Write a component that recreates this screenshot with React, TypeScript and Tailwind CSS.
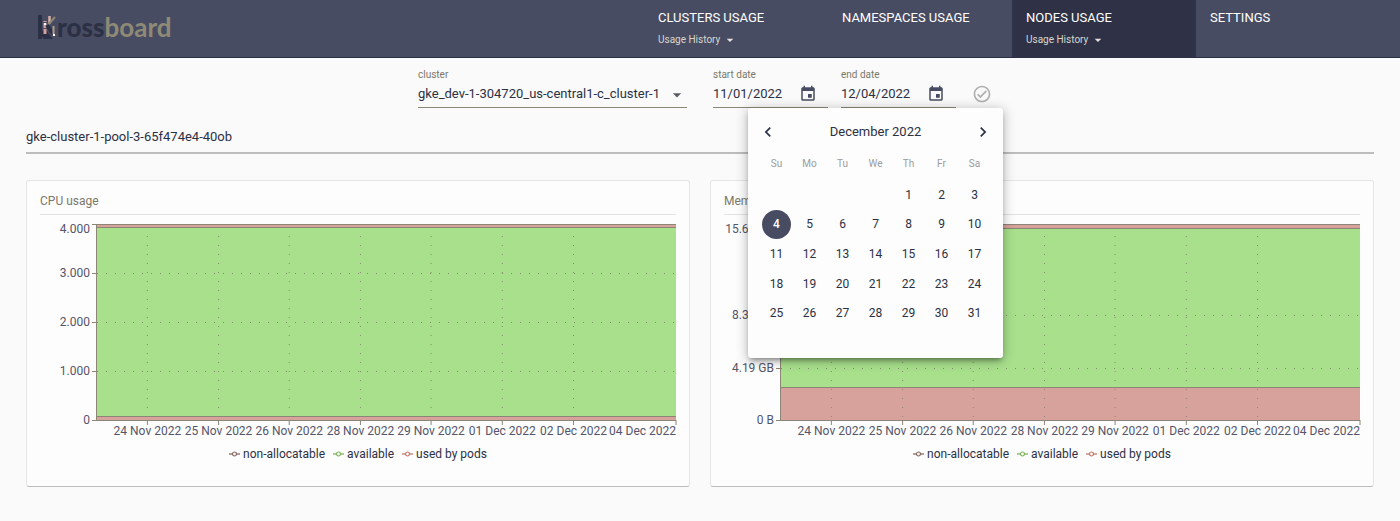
import { useState } from "react";
import {
  MdArrowDropDown,
  MdChevronLeft,
  MdChevronRight,
  MdEvent,
  MdOutlineCheckCircle,
} from "react-icons/md";

const PLOT_HEIGHT = 196;
const GREEN = "#a8e08c";
const RED = "#d8a29c";
const AXIS = "#8c8676";

const NAV = [
  { title: "CLUSTERS USAGE", menu: true, active: false },
  { title: "NAMESPACES USAGE", menu: false, active: false },
  { title: "NODES USAGE", menu: true, active: true },
  { title: "SETTINGS", menu: false, active: false },
];

const X_TICKS = [
  { label: "24 Nov 2022", at: 8.7 },
  { label: "25 Nov 2022", at: 21 },
  { label: "26 Nov 2022", at: 33.2 },
  { label: "28 Nov 2022", at: 45.5 },
  { label: "29 Nov 2022", at: 57.7 },
  { label: "01 Dec 2022", at: 70 },
  { label: "02 Dec 2022", at: 82.3 },
  { label: "04 Dec 2022", at: 100 },
];

const SERIES = [
  { name: "non-allocatable", color: "#8a6a62" },
  { name: "available", color: "#7fb45e" },
  { name: "used by pods", color: "#c07a6c" },
];

type YTick = { label: string; y: number };

type ChartProps = {
  title: string;
  yTicks: YTick[];
  topBand: number;
  bottomBand: number;
};

function Logo() {
  return (
    <a href="#home" aria-label="Krossboard" className="flex items-center pb-1">
      <svg width="19" height="26" viewBox="0 0 19 26" aria-hidden="true">
        <rect x="0" y="1" width="4" height="24" fill="#2c3044" />
        <path d="M4 17l3-2 8 10h-9l-2-2z" fill="#2c3044" />
        <path d="M7 20V7" stroke="#d8a29c" strokeWidth="3" strokeDasharray="5 1" />
        <path d="M11.500 2v8" stroke="#dcb0a8" strokeWidth="2.500" />
        <path d="M17 3l-7 8" stroke="#8c8874" strokeWidth="2" />
        <path d="M9 11l6 9" stroke="#2c3044" strokeWidth="4" />
        <path d="M15.500 12v8" stroke="#b09c8c" strokeWidth="2" />
        <rect x="6" y="9" width="2" height="2" fill="#ffffff" />
        <rect x="15" y="20" width="2" height="2" fill="#ffffff" />
      </svg>
      <span className="font-['Lato',sans-serif] text-[26px] leading-7 font-black text-[#2c3044]">
        ross
      </span>
      <span className="font-['Lato',sans-serif] text-[26px] leading-7 font-bold text-[#8e8a76]">
        board
      </span>
    </a>
  );
}

function Header() {
  return (
    <header className="flex h-[58px] border-b border-[#2c3044] bg-[#484c62] pr-5 pl-[38px]">
      <Logo />
      <nav className="ml-auto flex">
        {NAV.map((item) => (
          <div
            key={item.title}
            className={
              item.active
                ? "w-[184px] bg-[#2f3246] pt-2.5 pl-3.5"
                : "w-[184px] pt-2.5 pl-3.5"
            }
          >
            <a href="#usage" className="block text-[13px] leading-4 text-white">
              {item.title}
            </a>
            {item.menu && (
              <button
                type="button"
                aria-haspopup="menu"
                className="mt-1.5 flex items-center text-[10px] leading-4 text-[#d8d6cc]"
              >
                Usage History
                <MdArrowDropDown className="ml-0.5 size-4 text-[#e8e0dc]" />
              </button>
            )}
          </div>
        ))}
      </nav>
    </header>
  );
}

type DateFieldProps = {
  id: string;
  label: string;
  value: string;
  onChange: (value: string) => void;
};

function DateField({ id, label, value, onChange }: DateFieldProps) {
  return (
    <div className="w-[115px] border-b border-[#8c8676]">
      <label htmlFor={id} className="block text-[10px] leading-3 text-[#7c7868]">
        {label}
      </label>
      <div className="flex h-[26px] items-center">
        <input
          id={id}
          type="text"
          value={value}
          onChange={(e) => onChange(e.target.value)}
          className="w-[86px] bg-transparent text-[13px] leading-4 outline-none"
        />
        <button type="button" aria-label={"Choose " + label}>
          <MdEvent className="size-[18px] text-[#484c62]" />
        </button>
      </div>
    </div>
  );
}

const WEEKDAYS = ["Su", "Mo", "Tu", "We", "Th", "Fr", "Sa"];
const FIRST_WEEKDAY = 4;
const WEEKS = [0, 1, 2, 3, 4].map((week) =>
  WEEKDAYS.map((_, i) => {
    const day = week * 7 + i - FIRST_WEEKDAY + 1;
    return day >= 1 && day <= 31 ? day : null;
  }),
);

function Calendar({ selected, onSelect }: { selected: number; onSelect: (day: number) => void }) {
  return (
    <div
      role="dialog"
      aria-label="Choose date"
      className="absolute top-full -right-[47px] z-10 w-[255px] rounded-[3px] bg-[#fdfdfd] px-3 pt-3 pb-[30px] shadow-[0_4px_5px_-2px_rgba(0,0,0,0.35),0_2px_12px_1px_rgba(0,0,0,0.25)]"
    >
      <div className="-mx-0.5 flex h-6 items-center justify-between">
        <button type="button" aria-label="Previous month">
          <MdChevronLeft className="size-5" />
        </button>
        <span className="text-[13px] leading-4">December 2022</span>
        <button type="button" aria-label="Next month">
          <MdChevronRight className="size-5" />
        </button>
      </div>
      <table className="mt-1 h-[180px] w-full table-fixed text-center">
        <thead>
          <tr className="h-8">
            {WEEKDAYS.map((day) => (
              <th key={day} className="p-0 text-[10px] leading-3 font-normal text-[#9c9c9c]">
                {day}
              </th>
            ))}
          </tr>
        </thead>
        <tbody>
          {WEEKS.map((week, w) => (
            <tr key={w}>
              {week.map((day, d) => (
                <td key={d} className="p-0">
                  {day && (
                    <button
                      type="button"
                      onClick={() => onSelect(day)}
                      className={
                        day === selected
                          ? "mx-auto block size-[29px] rounded-full bg-[#484c62] text-xs font-medium text-white"
                          : "mx-auto block size-[29px] rounded-full text-xs"
                      }
                    >
                      {day}
                    </button>
                  )}
                </td>
              ))}
            </tr>
          ))}
        </tbody>
      </table>
    </div>
  );
}

function Filters() {
  const [start, setStart] = useState("11/01/2022");
  const [end, setEnd] = useState("12/04/2022");
  const pickEnd = (day: number) => setEnd("12/" + String(day).padStart(2, "0") + "/2022");
  const selectedDay = Number(end.split("/")[1]);

  return (
    <form className="flex justify-center pt-[11px] pl-2.5">
      <div className="relative w-[269px] border-b border-[#8c8676]">
        <label htmlFor="cluster" className="block text-[10px] leading-3 text-[#7c7868]">
          cluster
        </label>
        <select
          id="cluster"
          className="block h-[26px] w-full appearance-none bg-transparent text-[13px] outline-none"
        >
          <option>gke_dev-1-304720_us-central1-c_cluster-1</option>
        </select>
        <MdArrowDropDown className="pointer-events-none absolute right-0 bottom-0.5 size-5 text-[#5c5c62]" />
      </div>
      <div className="ml-[26px]">
        <DateField id="start-date" label="start date" value={start} onChange={setStart} />
      </div>
      <div className="relative ml-[13px]">
        <DateField id="end-date" label="end date" value={end} onChange={setEnd} />
        <Calendar selected={selectedDay} onSelect={pickEnd} />
      </div>
      <button type="button" aria-label="Apply" className="ml-4 self-center pt-2.5">
        <MdOutlineCheckCircle className="size-5 text-[#b0b0ae]" />
      </button>
    </form>
  );
}

function ChartCard({ title, yTicks, topBand, bottomBand }: ChartProps) {
  return (
    <section className="rounded-[3px] border border-[#e6e6e6] border-b-[#bdbdbd] bg-[#fdfdfd] px-[13px] pt-3 pb-6">
      <h2 className="border-b border-[#e2e2e2] pb-[5px] text-xs leading-4 text-[#7c7868]">
        {title}
      </h2>
      <div className="mt-[9px] flex">
        <svg
          className="h-[218px] w-[57px] shrink-0 overflow-visible fill-[#55556a] text-xs"
          aria-hidden="true"
        >
          {yTicks.map((t) => (
            <g key={t.label}>
              <line x1="52" x2="57" y1={t.y + 0.5} y2={t.y + 0.5} stroke={AXIS} />
              <text x="50" y={Math.max(t.y + 4, 9)} textAnchor="end">
                {t.label}
              </text>
            </g>
          ))}
        </svg>
        <svg
          className="h-[218px] min-w-0 flex-1 overflow-visible fill-[#55556a] text-xs"
          role="img"
          aria-label={title}
        >
          <rect width="100%" height={PLOT_HEIGHT} fill={GREEN} />
          <rect width="100%" height={topBand} fill={RED} />
          <rect y={PLOT_HEIGHT - bottomBand} width="100%" height={bottomBand} fill={RED} />
          {yTicks.slice(1, -1).map((t) => (
            <line
              key={t.label}
              x1="0"
              x2="100%"
              y1={t.y + 0.5}
              y2={t.y + 0.5}
              stroke={AXIS}
              strokeDasharray="1 8"
            />
          ))}
          {X_TICKS.slice(0, -1).map((t) => (
            <line
              key={t.label}
              x1={t.at + "%"}
              x2={t.at + "%"}
              y1="12"
              y2={PLOT_HEIGHT}
              stroke={AXIS}
              strokeDasharray="1 8"
            />
          ))}
          <line x1="0" x2="100%" y1="0.5" y2="0.5" stroke={AXIS} />
          <line x1="0" x2="100%" y1={topBand - 0.5} y2={topBand - 0.5} stroke={AXIS} />
          <line
            x1="0"
            x2="100%"
            y1={PLOT_HEIGHT - bottomBand + 0.5}
            y2={PLOT_HEIGHT - bottomBand + 0.5}
            stroke={AXIS}
          />
          <line x1="0" x2="100%" y1={PLOT_HEIGHT + 0.5} y2={PLOT_HEIGHT + 0.5} stroke={AXIS} />
          <line x1="-0.5" x2="-0.5" y1="0" y2={PLOT_HEIGHT + 1} stroke={AXIS} />
          {X_TICKS.map((t) => (
            <g key={t.label}>
              <line
                x1={t.at + "%"}
                x2={t.at + "%"}
                y1={PLOT_HEIGHT}
                y2={PLOT_HEIGHT + 5}
                stroke={AXIS}
              />
              <text
                x={t.at + "%"}
                y={PLOT_HEIGHT + 15}
                textAnchor={t.at === 100 ? "end" : "middle"}
              >
                {t.label}
              </text>
            </g>
          ))}
        </svg>
      </div>
      <ul className="mt-1 flex justify-center gap-2">
        {SERIES.map((s) => (
          <li key={s.name} className="flex items-center gap-[3px] text-xs leading-4">
            <svg width="11" height="6" viewBox="0 0 11 6" stroke={s.color} aria-hidden="true">
              <path d="M0 3h11" strokeWidth="1.300" />
              <circle cx="5.500" cy="3" r="2" fill="#fdfdfd" strokeWidth="1.200" />
            </svg>
            {s.name}
          </li>
        ))}
      </ul>
    </section>
  );
}

export default function App() {
  return (
    <div className="min-h-screen bg-[#fafafa] font-['Roboto',sans-serif] text-[#2c3044]">
      <Header />
      <main className="px-[26px]">
        <Filters />
        <h1 className="mt-[21px] border-b-2 border-[#bdbdbd] pb-[7px] text-[13px] leading-4">
          gke-cluster-1-pool-3-65f474e4-40ob
        </h1>
        <div className="mt-[26px] grid grid-cols-2 gap-5">
          <ChartCard
            title="CPU usage"
            topBand={4}
            bottomBand={4}
            yTicks={[
              { label: "4.000", y: 0 },
              { label: "3.000", y: 49 },
              { label: "2.000", y: 98 },
              { label: "1.000", y: 147 },
              { label: "0", y: 196 },
            ]}
          />
          <ChartCard
            title="Memory usage"
            topBand={5}
            bottomBand={33}
            yTicks={[
              { label: "15.64 GB", y: 0 },
              { label: "8.38 GB", y: 91 },
              { label: "4.19 GB", y: 144 },
              { label: "0 B", y: 196 },
            ]}
          />
        </div>
      </main>
    </div>
  );
}
